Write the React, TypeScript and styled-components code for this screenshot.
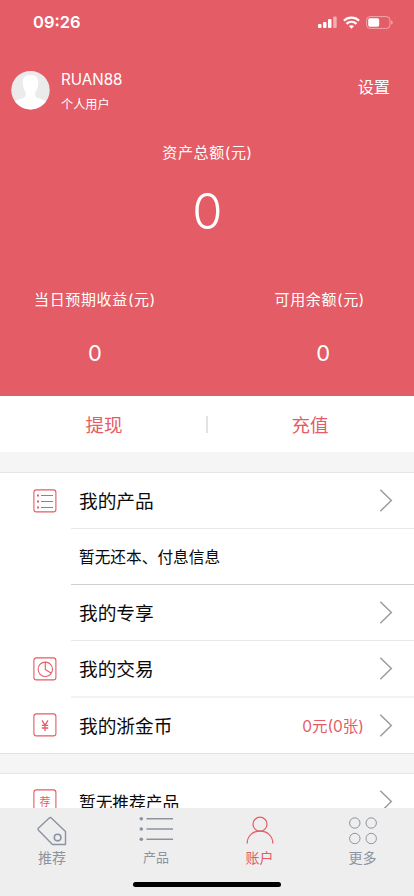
import React from 'react';
import styled, { createGlobalStyle } from 'styled-components';

const RED = '#e45c66';
const GREY = '#8c93a0';

const GlobalStyle = createGlobalStyle`
  * { box-sizing: border-box; }
  html, body { margin: 0; padding: 0; overflow: hidden; }
  body { font-family: Inter, 'Noto Sans CJK SC', sans-serif; background: #f5f5f5; }
  svg { display: block; flex: none; }
`;

const Screen = styled.div`
  width: 414px;
  height: 896px;
  display: flex;
  flex-direction: column;
  overflow: hidden;
  background: #f5f5f5;
`;

const Header = styled.header`
  height: 396px;
  flex: none;
  background: ${RED};
  color: #fff;
`;

const StatusBar = styled.div`
  height: 44px;
  display: flex;
  align-items: center;
  justify-content: space-between;
  padding: 0 21px 0 33px;
`;

const Clock = styled.span`
  font-size: 16.5px;
  font-weight: 600;
  line-height: 20px;
`;

const StatusIcons = styled.div`
  display: flex;
  align-items: center;
  gap: 6px;
`;

const Profile = styled.div`
  height: 92px;
  display: flex;
  align-items: center;
  padding: 0 24px 0 11px;
`;

const ProfileText = styled.div`
  flex: 1;
  margin-left: 11px;
  padding-top: 6px;
`;

const UserName = styled.div`
  font-size: 15.2px;
  line-height: 20px;
  height: 23px;
`;

const UserKind = styled.div`
  font-size: 12.2px;
  line-height: 24px;
  height: 24px;
`;

const Settings = styled.span`
  font-size: 16.2px;
  line-height: 24px;
  margin-bottom: 6px;
`;

const Label = styled.div`
  font-size: 15px;
  line-height: 24px;
  letter-spacing: 0.65px;
  text-align: center;
`;

const Total = styled.div`
  padding: 5px 0 0 1px;
  height: 152px;
`;

const Amount = styled.div<{ $large?: boolean }>`
  text-align: center;
  font-weight: ${(p) => (p.$large ? 350 : 400)};
  font-size: ${(p) => (p.$large ? 49 : 22)}px;
  line-height: ${(p) => (p.$large ? 60 : 28)}px;
  margin-top: ${(p) => (p.$large ? 17 : 27)}px;
`;

const Stats = styled.div`
  display: flex;
  justify-content: space-between;
  padding: 0 49px 0 34px;
`;

const Stat = styled.div<{ $indent?: number }>`
  ${Amount} {
    padding-left: ${(p) => p.$indent ?? 0}px;
  }
`;

const Actions = styled.div`
  height: 56px;
  flex: none;
  display: flex;
  align-items: center;
  background: #fff;
`;

const Action = styled.div<{ $shift: 'left' | 'right' }>`
  flex: 1;
  text-align: center;
  color: ${RED};
  font-size: 18.5px;
  line-height: 28px;
  padding-top: 1px;
  padding-${(p) => p.$shift}: 2px;
`;

const ActionDivider = styled.div`
  width: 2px;
  height: 17px;
  background: #e2e2e2;
`;

const Group = styled.section<{ $gap: number }>`
  flex: none;
  margin-top: ${(p) => p.$gap}px;
  background: #fff;
  border-top: 1px solid #e5e5e5;
  border-bottom: 1px solid #e2e2e2;
`;

const Row = styled.div<{ $height: number }>`
  height: ${(p) => p.$height}px;
  display: flex;
  align-items: center;
`;

const IconCell = styled.div`
  width: 71px;
  padding: 0 0 1px 33px;
  flex: none;
`;

const RowBody = styled.div<{ $line?: string; $thick?: boolean }>`
  flex: 1;
  height: 100%;
  display: flex;
  align-items: center;
  padding: 0 21px 0 8px;
  border-bottom: ${(p) => (p.$line ? `${p.$thick ? 2 : 1}px solid ${p.$line}` : 'none')};
`;

const RowTitle = styled.span<{ $size: number }>`
  flex: 1;
  color: #0a0a0a;
  font-size: ${(p) => p.$size}px;
  line-height: 28px;
  margin-top: 2px;
`;

const RowValue = styled.span`
  color: ${RED};
  font-size: 15.5px;
  line-height: 24px;
  margin: 2px 15px 0 0;
`;

const TabBar = styled.nav`
  position: fixed;
  top: 808px;
  left: 0;
  width: 414px;
  height: 88px;
  background: #eeeeee;
`;

const Tabs = styled.div`
  display: grid;
  grid-template-columns: 104px 104px 103px 103px;
  height: 74px;
`;

const Tab = styled.div<{ $active?: boolean }>`
  display: flex;
  flex-direction: column;
  align-items: center;
  padding-top: 8px;
  color: ${(p) => (p.$active ? RED : GREY)};
`;

const TabLabel = styled.span<{ $size: number }>`
  font-size: ${(p) => p.$size}px;
  line-height: 20px;
  margin-top: ${(p) => (p.$size < 14 ? 1 : 2)}px;
`;

const HomeIndicator = styled.div`
  width: 148px;
  height: 5px;
  margin: 0 auto;
  border-radius: 3px;
  background: #000;
`;

const Avatar = () => (
  <svg width="39" height="39" viewBox="0 0 39 39">
    <defs>
      <clipPath id="avatar">
        <circle cx="19.5" cy="19.2" r="19.2" />
      </clipPath>
    </defs>
    <circle cx="19.5" cy="19.2" r="19.2" fill="#ebebeb" />
    <path
      clipPath="url(#avatar)"
      fill="#fff"
      d="M11.7 12C11.5 6.5 14.5 4 19.5 4S27.500 6.500 27.300 12C27.200 16 25.800 19 24.300 21.500C23.800 24 24.500 26.200 26.500 27C30 28.200 34 29 36 31L30 39H9L3 31C5 29 9 28.200 12.500 27C14.500 26.200 15.200 24 14.700 21.500C13.200 19 11.800 16 11.700 12Z"
    />
  </svg>
);

const Signal = () => (
  <svg width="19" height="12" viewBox="0 0 19 12" fill="#fff">
    <rect x="0" y="8" width="3.500" height="4" rx="1" />
    <rect x="5" y="6" width="3.500" height="6" rx="1" />
    <rect x="10" y="3" width="3.500" height="9" rx="1" />
    <rect x="15.200" y="0.500" width="3.500" height="11.500" rx="1" opacity="0.5" />
  </svg>
);

const Wifi = () => (
  <svg width="17" height="13" viewBox="0 0 17 13" fill="none" stroke="#fff" strokeWidth="2.200">
    <path d="M0.900 4.700C5 0.600 12 0.600 16.100 4.700" />
    <path d="M3.500 7.900C6.400 5.200 10.600 5.200 13.500 7.900" />
    <path d="M5.900 10.100Q8.500 8.200 11.100 10.100L8.500 12.800Z" fill="#fff" stroke="none" />
  </svg>
);

const Battery = () => (
  <svg width="27" height="13" viewBox="0 0 27 13">
    <rect x="0.600" y="0.600" width="23.400" height="11.800" rx="3.500" fill="none" stroke="#fff" opacity="0.450" />
    <rect x="2.200" y="2.300" width="11" height="8.400" rx="1.700" fill="#fff" />
    <path d="M25.200 4.500Q26.700 5 26.700 6.500T25.200 8.500Z" fill="#fff" opacity="0.500" />
  </svg>
);

const IconFrame = ({ children }: { children: React.ReactNode }) => (
  <svg width="24" height="24" viewBox="0 0 24 24" fill="none" stroke={RED} strokeWidth="1.100">
    <rect x="0.900" y="0.900" width="22" height="22" rx="2.500" />
    {children}
  </svg>
);

const ListIcon = () => (
  <IconFrame>
    <path d="M8 6.500H20M8 12.500H20M8 18.500H20" />
    <path d="M4 6.500H6M4 12.500H6M4 18.500H6" strokeWidth="2" />
  </IconFrame>
);

const PieIcon = () => (
  <IconFrame>
    <circle cx="12.300" cy="12.300" r="7.200" />
    <path d="M12.300 5V12.400L18.300 16.300" />
  </IconFrame>
);

const YenIcon = () => (
  <IconFrame>
    <path d="M9 7.300L12 12L15 7.300M12 12V18M8.800 12.300H15.200M8.800 15H15.200" strokeWidth="1.300" />
  </IconFrame>
);

const RecommendIcon = () => (
  <IconFrame>
    <text x="12" y="16.500" textAnchor="middle" fontSize="11" fill={RED} stroke="none">
      荐
    </text>
  </IconFrame>
);

const Chevron = () => (
  <svg width="14" height="24" viewBox="0 0 14 24" fill="none" stroke="#9c9c9c" strokeWidth="1.500">
    <path d="M1.300 0.800L12.300 11.500L1.300 22.200" />
  </svg>
);

const TagTabIcon = () => (
  <svg width="30" height="30" viewBox="0 0 30 30" fill="none" stroke="currentColor" strokeWidth="1.400">
    <path d="M14 1.700Q13 1.200 12 2.200L1.300 12.200Q0.700 13.200 1.500 14.200L15.500 28.500H28.500V15.600Z" strokeLinejoin="round" />
    <circle cx="20.600" cy="21.600" r="3.300" strokeWidth="1.600" />
  </svg>
);

const ListTabIcon = () => (
  <svg width="34" height="30" viewBox="0 0 34 30" fill="none" stroke="currentColor" strokeWidth="1.600">
    <path d="M7.500 2.700H34M7.500 13H34M7.500 23.300H34" />
    <g fill="currentColor" stroke="none">
      <circle cx="2.300" cy="2.700" r="1.800" />
      <circle cx="2.300" cy="13" r="1.800" />
      <circle cx="2.300" cy="23.300" r="1.800" />
    </g>
  </svg>
);

const UserTabIcon = () => (
  <svg width="28" height="30" viewBox="0 0 28 30" fill="none" stroke="currentColor" strokeWidth="1.200">
    <circle cx="14" cy="8.200" r="7" />
    <path d="M1.200 27.500C1.200 19.500 7 15.200 14 15.200S26.800 19.500 26.800 27.500" />
  </svg>
);

const MoreTabIcon = () => (
  <svg width="28" height="30" viewBox="0 0 28 30" fill="none" stroke="currentColor" strokeWidth="1">
    <circle cx="5.800" cy="7" r="5.200" />
    <circle cx="22.200" cy="7" r="5.200" />
    <circle cx="5.800" cy="22.500" r="5.200" />
    <circle cx="22.200" cy="22.500" r="5.200" />
  </svg>
);

export default function App() {
  return (
    <Screen>
      <GlobalStyle />
      <Header>
        <StatusBar>
          <Clock>09:26</Clock>
          <StatusIcons>
            <Signal />
            <Wifi />
            <Battery />
          </StatusIcons>
        </StatusBar>
        <Profile>
          <Avatar />
          <ProfileText>
            <UserName>RUAN88</UserName>
            <UserKind>个人用户</UserKind>
          </ProfileText>
          <Settings>设置</Settings>
        </Profile>
        <Total>
          <Label>资产总额(元)</Label>
          <Amount $large>0</Amount>
        </Total>
        <Stats>
          <Stat>
            <Label>当日预期收益(元)</Label>
            <Amount>0</Amount>
          </Stat>
          <Stat $indent={7}>
            <Label>可用余额(元)</Label>
            <Amount>0</Amount>
          </Stat>
        </Stats>
      </Header>
      <Actions>
        <Action $shift="left">提现</Action>
        <ActionDivider />
        <Action $shift="right">充值</Action>
      </Actions>
      <Group $gap={20}>
        <Row $height={56}>
          <IconCell><ListIcon /></IconCell>
          <RowBody $line="#e8e8e8">
            <RowTitle $size={18.7}>我的产品</RowTitle>
            <Chevron />
          </RowBody>
        </Row>
        <Row $height={56}>
          <IconCell />
          <RowBody $line="#cfcfcf">
            <RowTitle $size={15.7}>暂无还本、付息信息</RowTitle>
          </RowBody>
        </Row>
        <Row $height={56}>
          <IconCell />
          <RowBody $line="#e8e8e8">
            <RowTitle $size={18.7}>我的专享</RowTitle>
            <Chevron />
          </RowBody>
        </Row>
        <Row $height={57}>
          <IconCell><PieIcon /></IconCell>
          <RowBody $line="#f3f3f3" $thick>
            <RowTitle $size={18.7}>我的交易</RowTitle>
            <Chevron />
          </RowBody>
        </Row>
        <Row $height={55}>
          <IconCell><YenIcon /></IconCell>
          <RowBody>
            <RowTitle $size={18.7}>我的浙金币</RowTitle>
            <RowValue>0元(0张)</RowValue>
            <Chevron />
          </RowBody>
        </Row>
      </Group>
      <Group $gap={19}>
        <Row $height={55}>
          <IconCell><RecommendIcon /></IconCell>
          <RowBody>
            <RowTitle $size={16.7}>暂无推荐产品</RowTitle>
            <Chevron />
          </RowBody>
        </Row>
      </Group>
      <TabBar>
        <Tabs>
          <Tab><TagTabIcon /><TabLabel $size={14}>推荐</TabLabel></Tab>
          <Tab><ListTabIcon /><TabLabel $size={13}>产品</TabLabel></Tab>
          <Tab $active><UserTabIcon /><TabLabel $size={14}>账户</TabLabel></Tab>
          <Tab><MoreTabIcon /><TabLabel $size={14}>更多</TabLabel></Tab>
        </Tabs>
        <HomeIndicator />
      </TabBar>
    </Screen>
  );
}
